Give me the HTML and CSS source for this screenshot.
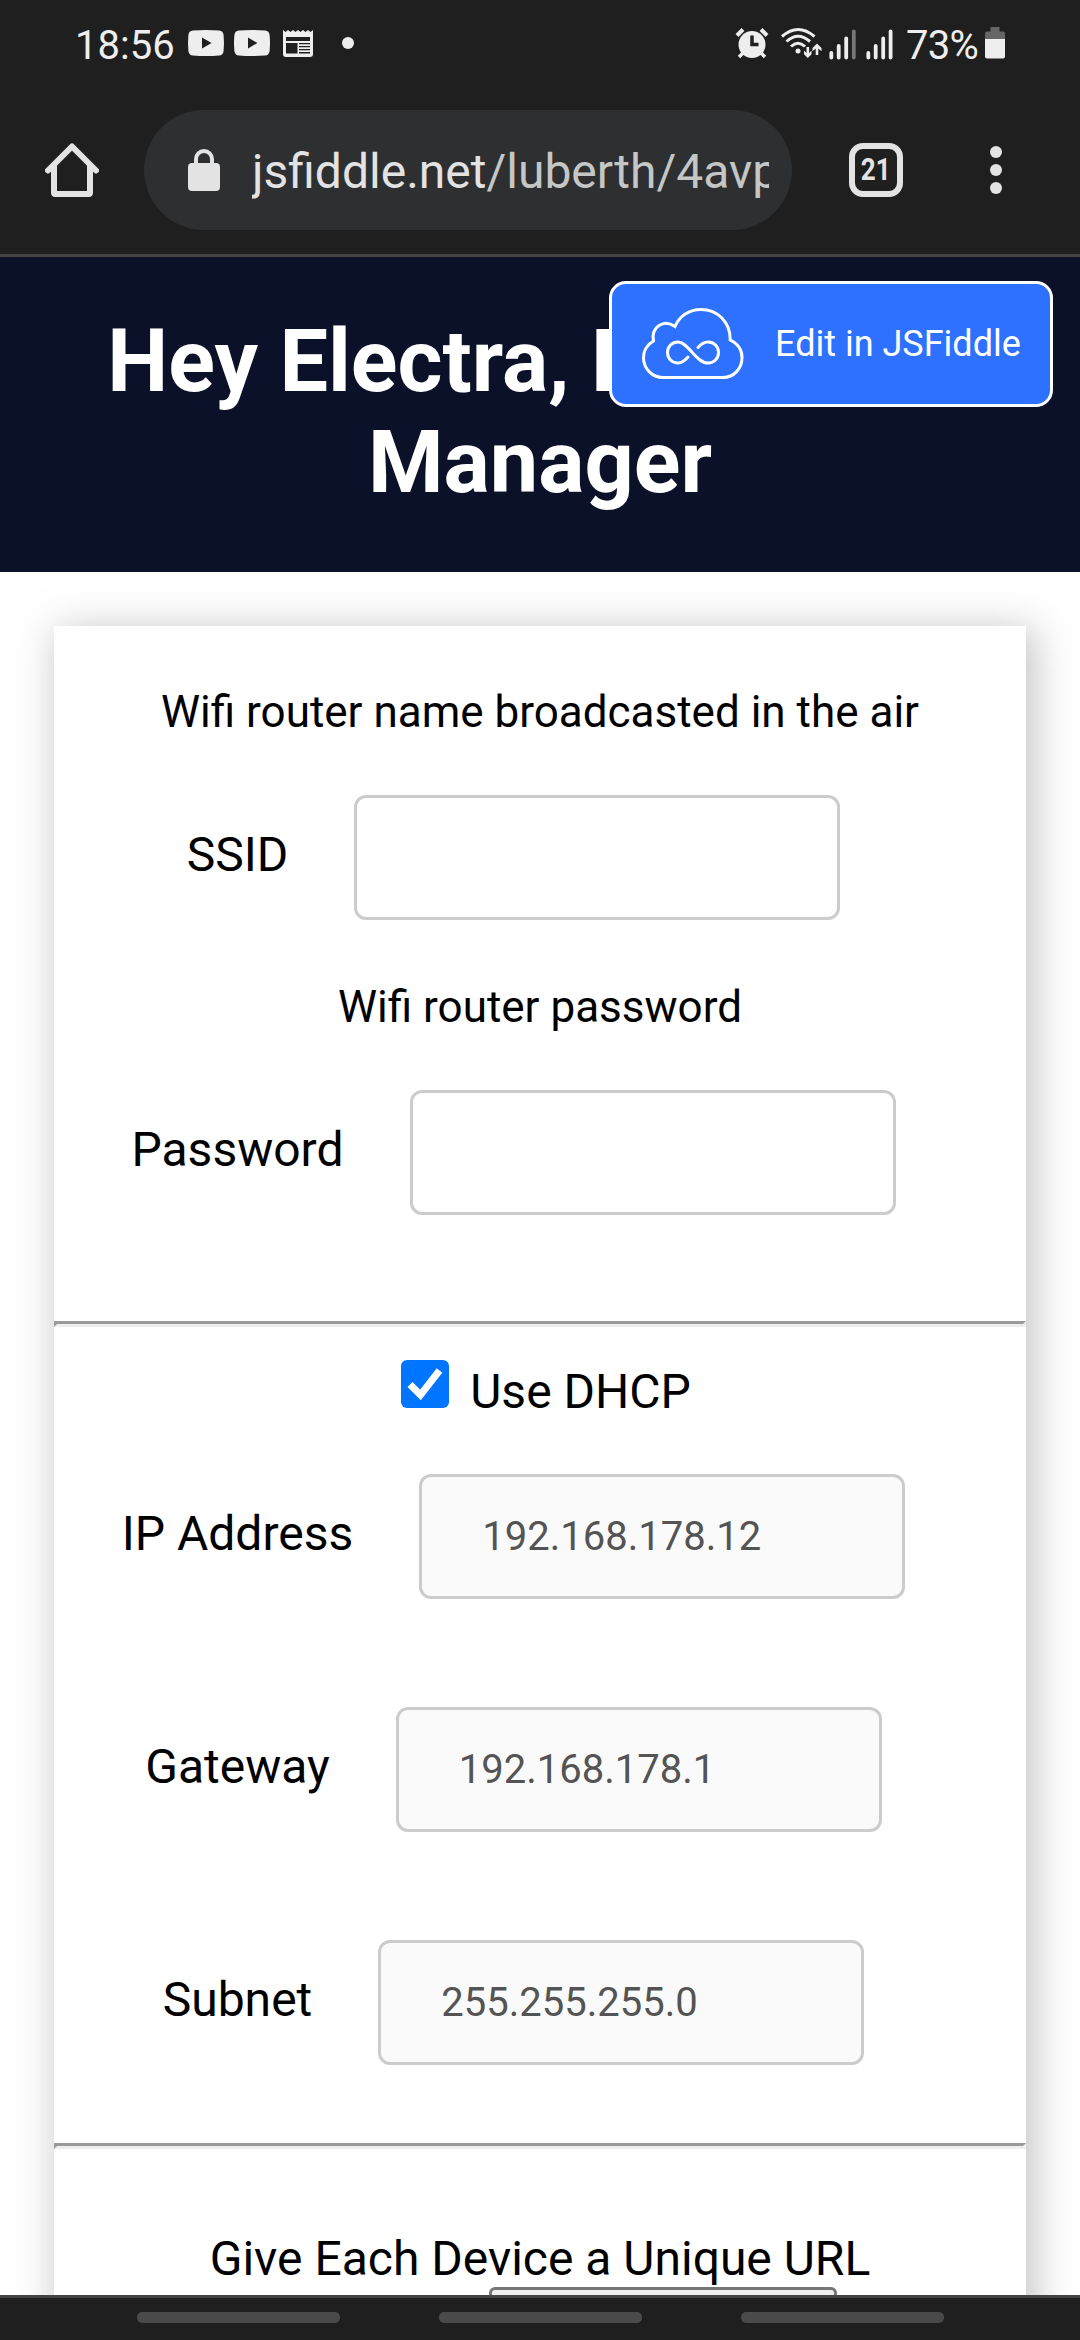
FILE: index.html
```html
<!DOCTYPE html>
<html lang="en">
<head>
<meta charset="utf-8">
<title>Hey Electra</title>
<link rel="stylesheet" href="styles.css">
</head>
<body>
<div class="screen">
  <div class="status">
    <span class="clock">18:56</span>
    <svg class="notif" width="170" height="44" viewBox="184 22 170 44" fill="#eee">
      <path id="yt" fill-rule="evenodd" d="M193 30.4Q206 29.4 219 30.4Q223.200 30.800 223.600 35Q224.400 43 223.600 51Q223.200 55.200 219 55.600Q206 56.600 193 55.600Q188.800 55.200 188.400 51Q187.600 43 188.400 35Q188.800 30.800 193 30.400ZM202 37.500V48.500L211.500 43Z"/>
      <use href="#yt" x="46"/>
      <path fill-rule="evenodd" d="M283 30l2.500 2 2.500-2 2.500 2 2.500-2 2.500 2 2.500-2 2.500 2 2.500-2 2.500 2 2.500-2 2.500 2 2.500-2V54q0 3-3 3H286q-3 0-3-3ZM286 37V41H310V37ZM286 43V53.500H297.500V43ZM299 43v1.300H310V43ZM299 46v1.300H310V46ZM299 49v1.300H310V49ZM299 52v1.500H310V52Z"/>
      <circle cx="348" cy="43" r="6"/>
    </svg>
    <svg class="system" width="162" height="44" viewBox="733 22 162 44" fill="#eee">
      <circle cx="752" cy="44.500" r="13.500"/>
      <path d="M737 35.500l6-6M767 35.500l-6-6" stroke="#eee" stroke-width="4"/>
      <path d="M743 53l-4 4M761 53l4 4" stroke="#eee" stroke-width="3.500"/>
      <path d="M752 35.500V44.500H758.500" fill="none" stroke="#1f1f1f" stroke-width="3.500"/>
      <g fill="none" stroke="#eee" stroke-width="3">
        <path d="M782 36.500Q798 22.500 814.500 36.500"/>
        <path d="M786.500 41.500Q798 31 810 41.500"/>
        <path d="M791 46.500Q798 40 805 46.500"/>
      </g>
      <circle cx="798" cy="51" r="2.500"/>
      <path d="M806.500 47h2.600v6l2.400-2.400v3.600L807.800 58l-3.800-3.800v-3.600l2.500 2.400ZM815.700 55h2.600v-6.500l3.200 2.800v-3.400L817 43.600l-4.500 4.300v3.400l3.200-2.800Z"/>
      <path id="bars" d="M831.300 53V57.500M838.700 46V57.500M846.200 38.500V57.500" stroke="#eee" stroke-width="3.800" stroke-linecap="round"/>
      <path d="M853.800 31.500V57.500" stroke="#777" stroke-width="3.800" stroke-linecap="round"/>
      <use href="#bars" x="37"/>
      <path d="M890.600 31.500V57.500" stroke="#eee" stroke-width="3.800" stroke-linecap="round"/>
    </svg>
    <span class="percent">73%</span>
    <svg class="battery" width="20" height="32" viewBox="0 0 20 32">
      <path fill="#666" d="M5.500 0H14.500V4.500H18q2 0 2 2V12H0V6.500q0-2 2-2H5.500Z"/>
      <path fill="#eee" d="M0 12H20V29.500q0 2-2 2H2q-2 0-2-2Z"/>
    </svg>
  </div>
  <div class="toolbar">
    <svg class="home" width="54" height="54" viewBox="0 0 54 54" fill="none" stroke="#e3e3e3" stroke-width="6" stroke-linejoin="round" stroke-linecap="round">
      <path d="M3 27.500L27 3.500L51 27.500M9 22V49.500Q9 51 10.500 51H43.500Q45 51 45 49.500V22"/>
    </svg>
    <div class="omnibox">
      <svg class="lock" width="32" height="42" viewBox="0 0 32 42">
        <rect y="14" width="32" height="28" rx="4" fill="#e3e3e3"/>
        <path d="M8 16V10a8 8 0 0 1 16 0V16" fill="none" stroke="#e3e3e3" stroke-width="4"/>
      </svg>
      <div class="url">jsfiddle.net<span class="path">/luberth/4avp</span></div>
    </div>
    <div class="tabs"><span class="count">21</span></div>
    <svg class="more" width="12" height="48" viewBox="0 0 12 48" fill="#e3e3e3"><circle cx="6" cy="6" r="6"/><circle cx="6" cy="24" r="6"/><circle cx="6" cy="42" r="6"/></svg>
  </div>
  <main class="page">
    <header class="topnav">
      <h1 class="title">Hey Electra, ESP Wi-Fi Manager</h1>
      <a class="edit">
        <svg class="cloud" width="102" height="72" viewBox="0 0 102 72" fill="none" stroke="#fff" stroke-width="3" stroke-linecap="round">
          <path stroke-linejoin="miter" d="M21 69.500H81C92 69.500 100 60.500 100 49.500C100 42 95.500 35.500 88.200 32C88.500 14 75.500 1.500 59 1.500C47 1.500 37.500 8 33 18.500C22 10.500 8.500 19 11.500 33C5.500 36.500 1.500 42.500 1.500 49.500C1.500 60.500 10 69.500 21 69.500Z"/>
          <path d="M46 49C42 53.500 39.500 55 36 55C30 55 25.500 50.500 25.500 44.500C25.500 38.500 30 34 36 34C46 34 54 55 66 55C72 55 76.500 50.500 76.500 44.500C76.500 38.500 72 34 66 34C62.500 34 59 36 56 39.500"/>
        </svg>
        <span>Edit in JSFiddle</span>
      </a>
    </header>
    <form class="card">
      <p class="hint">Wifi router name broadcasted in the air</p>
      <div class="row"><label>SSID</label><input class="field" type="text"></div>
      <p class="hint second">Wifi router password</p>
      <div class="row"><label>Password</label><input class="field" type="text"></div>
      <hr class="rule">
      <div class="dhcp">
        <svg class="check" width="48" height="48" viewBox="0 0 48 48"><rect width="48" height="48" rx="6" fill="#0075ff"/><path d="M9 24.500L19.500 35L38.500 10.500" fill="none" stroke="#fff" stroke-width="7"/></svg>
        <label>Use DHCP</label>
      </div>
      <div class="group">
        <div class="row"><label>IP Address</label><input class="field" type="text" value="192.168.178.12" disabled></div>
        <div class="row"><label>Gateway</label><input class="field" type="text" value="192.168.178.1" disabled></div>
        <div class="row"><label>Subnet</label><input class="field" type="text" value="255.255.255.0" disabled></div>
      </div>
      <hr class="rule end">
      <div class="unique">Give Each Device a Unique URL</div>
      <div class="button-top"></div>
    </form>
  </main>
  <footer class="navbar"><i></i><i></i><i></i></footer>
</div>
</body>
</html>
```

FILE: styles.css
```css
* { box-sizing: border-box; }
body { margin: 0; font-family: Roboto, "Noto Sans", sans-serif; color: #000; background: #fff; }
.screen { width: 1080px; height: 2340px; overflow: hidden; display: flex; flex-direction: column; }
svg { display: block; flex: none; }

.status { height: 86px; flex: none; background: #1f1f1f; color: #eee; display: flex; align-items: flex-start; padding-left: 75px; font-size: 40px; line-height: 47px; }
.clock { width: 109px; padding-top: 22px; }
.notif { margin-top: 22px; }
.system { margin: 22px 0 0 379px; }
.percent { width: 90px; padding: 22px 0 0 11px; letter-spacing: -.7px; white-space: nowrap; }
.battery { margin-top: 27px; }

.toolbar { height: 171px; flex: none; background: #1f1f1f; border-bottom: 3px solid #444; display: flex; align-items: center; padding: 0 0 0 45px; }
.omnibox { width: 648px; height: 120px; margin-left: 45px; border-radius: 60px; background: #2e2f31; display: flex; align-items: center; padding-left: 44px; }
.url { width: 517px; margin-left: 32px; padding-top: 3px; overflow: hidden; white-space: nowrap; font-size: 48px; line-height: 60px; color: #e3e3e3; }
.path { color: #c4c7c5; }
.tabs { width: 54px; height: 54px; margin-left: 57px; border: 6px solid #e3e3e3; border-radius: 14px; display: flex; align-items: center; justify-content: center; }
.count { font-size: 31px; line-height: 34px; font-weight: 700; color: #e3e3e3; transform: scaleX(.84); }
.more { margin-left: 87px; }

.page { flex: 1; min-height: 0; overflow: hidden; background: #fff; }
.topnav { position: relative; height: 315px; background: #0a1128; padding-top: 54px; }
.title { margin: 0; font-size: 86.4px; line-height: 101px; font-weight: 700; color: #fff; text-align: center; padding: 0 60px; }
.edit { position: absolute; top: 24px; right: 27px; width: 444px; height: 126px; border: 3px solid #fff; border-radius: 17px; background: #2e71ff; color: #fff; font-size: 36px; display: flex; align-items: center; padding-left: 30px; white-space: nowrap; }
.edit span { margin-left: 31px; }

.card { margin: 54px 54px 0; height: 1900px; padding-top: 60px; background: #fff; box-shadow: 6px 6px 36px 3px rgba(140, 140, 140, .5); font-size: 48px; line-height: 56px; }
.hint { margin: 0 0 56px; font-size: 44px; line-height: 53px; text-align: center; }
.second { margin-top: 61px; }
.row { height: 125px; display: flex; justify-content: center; align-items: baseline; gap: 66px; padding-right: 53px; }
.field { width: 486px; height: 125px; border: 3px solid #ccc; border-radius: 12px; background: #fff; padding: 0 60px; font: 40px Roboto, sans-serif; color: #545454; }
.field:disabled { background: #fafafa; }
.rule { margin: 106px 0 0; border: 3px solid; border-color: #9a9a9a #eee #eee #9a9a9a; height: 6px; }
.dhcp { height: 147px; display: flex; justify-content: center; align-items: flex-start; gap: 21px; padding: 33px 0 0 12px; }
.dhcp label { padding-top: 4px; }
.group { display: flex; flex-direction: column; gap: 108px; }
.end { margin-top: 78px; }
.unique { margin-top: 82px; text-align: center; }
.button-top { width: 348px; height: 60px; margin: 0 0 0 435px; border: 3px solid #767676; border-radius: 6px; background: #efefef; }

.navbar { height: 45px; flex: none; background: #1f1f1f; border-top: 3px solid #444; display: flex; justify-content: center; gap: 99px; padding-top: 14px; }
.navbar i { width: 203px; height: 11px; border-radius: 5px; background: #4a4a4a; }
```
